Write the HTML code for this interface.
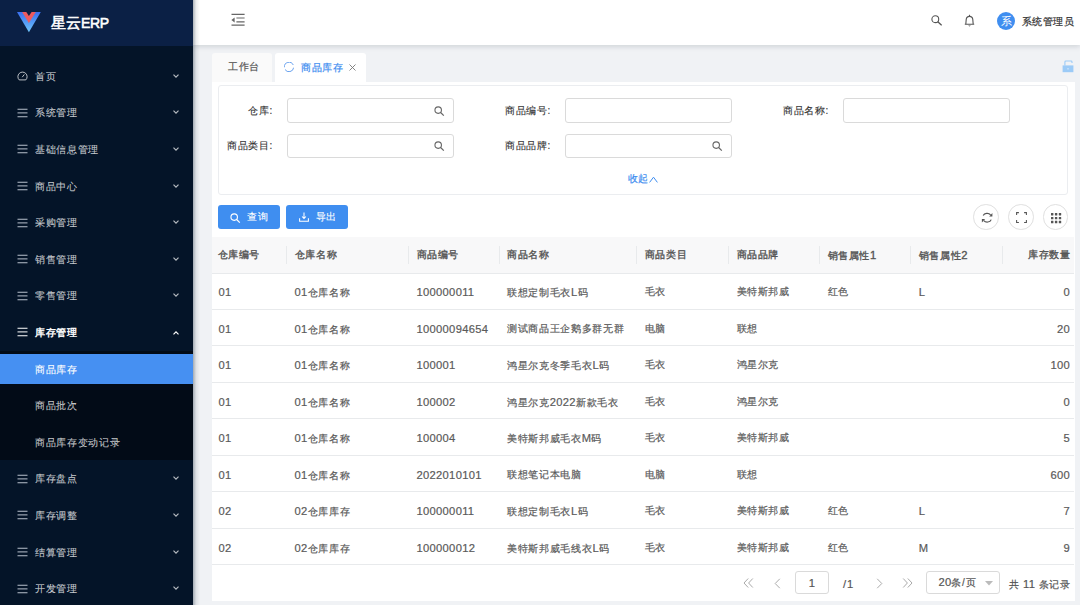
<!DOCTYPE html>
<html><head><meta charset="utf-8">
<style>
*{box-sizing:border-box;margin:0;padding:0}
html,body{width:1080px;height:605px;overflow:hidden}
body{position:relative;background:#f0f2f5;font-family:"Liberation Sans",sans-serif;font-size:10px;letter-spacing:.65px;color:#555;-webkit-text-stroke-width:.2px}
.abs{position:absolute}
.l{font-size:11.2px;letter-spacing:.3px}
#side{position:absolute;left:0;top:0;width:193px;height:605px;background:#041428;z-index:3}
#sshadow{position:absolute;left:193px;top:0;width:7px;height:605px;background:linear-gradient(to right,rgba(0,21,41,.32),rgba(0,21,41,.08) 45%,rgba(0,21,41,0));z-index:4}
#logo{position:absolute;left:0;top:0;width:193px;height:45.5px;background:#0b2045}
#logo .t{position:absolute;left:51px;top:12px;font-size:14.5px;color:#fff;line-height:22px;letter-spacing:0;-webkit-text-stroke-width:.55px}
#logo .t .l{font-size:14px;letter-spacing:-.4px}
.mi{position:absolute;left:0;width:193px;height:36.5px;line-height:36.5px;color:rgba(255,255,255,.72)}
.mi .tx{position:absolute;left:35px;top:1px;-webkit-text-stroke-width:.1px}
.mi .ic{position:absolute;left:16.5px;top:13.5px;width:11px;height:10px;overflow:visible}
.mi .ar{position:absolute;left:172.9px;top:16.2px;width:6px;height:4px;overflow:visible}
#sub{position:absolute;left:0;top:351px;width:193px;height:108.5px;background:#020b17}
#act{position:absolute;left:0;top:353.5px;width:193px;height:30px;background:#4690f2}
#hdr{position:absolute;left:193px;top:0;width:887px;height:45px;background:#fff;box-shadow:0 2px 5px rgba(0,21,41,.13);z-index:2}
#cont{position:absolute;left:212px;top:82px;width:863px;height:519px;background:#fff}
.tab{position:absolute;top:53px;height:29px;border-radius:3px 3px 0 0;line-height:29px}
.inp{position:absolute;height:24.5px;border:1px solid #dadada;border-radius:3px;background:#fff}
.lbl{position:absolute;color:#333;line-height:14px;text-align:right;margin-top:-.3px;-webkit-text-stroke-width:.12px}
.btn{position:absolute;top:205px;height:24px;width:62px;border-radius:3px;background:#3f8ef0;color:#fff;line-height:24px;-webkit-text-stroke-width:.1px}
.cbtn{position:absolute;top:204px;width:25.5px;height:25.5px;border-radius:50%;border:1px solid #e0e0e0;background:#fff}
#thead{position:absolute;z-index:1;left:212px;top:237.3px;width:862px;height:36.6px;background:#f8f8f9;border-bottom:1px solid #e8eaec}
.row{position:absolute;left:212px;width:862px;height:36.6px;border-bottom:1px solid #e8eaec;background:#fff}
.c{position:absolute;top:0;line-height:38px;white-space:nowrap;color:#5a5a5a}
.th{color:#555;-webkit-text-stroke-width:.35px;line-height:36px}
.dv{position:absolute;top:9px;width:1px;height:18px;background:#e8eaec}
</style></head>
<body>
<div id="side">
<div id="logo">
<svg class="abs" style="left:17px;top:12px" width="24" height="21" viewBox="0 0 24 21">
<defs><linearGradient id="lg" x1="0" y1="0" x2="0" y2="1"><stop offset="0" stop-color="#3a6ff0"/><stop offset="1" stop-color="#6ec6fb"/></linearGradient></defs>
<polygon points="0,0 23.8,0 11.9,20.2" fill="url(#lg)"/>
<polygon points="5.1,0 18.8,0 11.9,10.9" fill="#ee5a5e"/>
<polygon points="9.3,0 14.6,0 11.9,3.9" fill="#0b2045"/>
</svg>
<div class="t">星云<span class="l">ERP</span></div>
</div>
<div id="sub"></div><div id="act"></div>
<div class="mi" style="top:57.70px"><svg class="ic" viewBox="0 0 11 10"><path d="M2.2,8.9 A4.6,4.6 0 1 1 8.8,8.9 Z" fill="none" stroke="currentColor" stroke-width="1"/><path d="M5.2,6.2 L7.4,3.4" stroke="currentColor" stroke-width="1"/></svg><svg class="ar" viewBox="0 0 6 4"><path d="M0.5,0.7 L3,3.2 L5.5,0.7" fill="none" stroke="currentColor" stroke-width="1.15"/></svg><span class="tx">首页</span></div>
<div class="mi" style="top:94.30px"><svg class="ic" viewBox="0 0 11 10"><path d="M0.5,1.25 H10.5 M0.5,4.9 H10.5 M0.5,8.75 H10.5" stroke="#b8c0cc" stroke-width="1"/></svg><svg class="ar" viewBox="0 0 6 4"><path d="M0.5,0.7 L3,3.2 L5.5,0.7" fill="none" stroke="currentColor" stroke-width="1.15"/></svg><span class="tx">系统管理</span></div>
<div class="mi" style="top:130.90px"><svg class="ic" viewBox="0 0 11 10"><path d="M0.5,1.25 H10.5 M0.5,4.9 H10.5 M0.5,8.75 H10.5" stroke="#b8c0cc" stroke-width="1"/></svg><svg class="ar" viewBox="0 0 6 4"><path d="M0.5,0.7 L3,3.2 L5.5,0.7" fill="none" stroke="currentColor" stroke-width="1.15"/></svg><span class="tx">基础信息管理</span></div>
<div class="mi" style="top:167.50px"><svg class="ic" viewBox="0 0 11 10"><path d="M0.5,1.25 H10.5 M0.5,4.9 H10.5 M0.5,8.75 H10.5" stroke="#b8c0cc" stroke-width="1"/></svg><svg class="ar" viewBox="0 0 6 4"><path d="M0.5,0.7 L3,3.2 L5.5,0.7" fill="none" stroke="currentColor" stroke-width="1.15"/></svg><span class="tx">商品中心</span></div>
<div class="mi" style="top:204.10px"><svg class="ic" viewBox="0 0 11 10"><path d="M0.5,1.25 H10.5 M0.5,4.9 H10.5 M0.5,8.75 H10.5" stroke="#b8c0cc" stroke-width="1"/></svg><svg class="ar" viewBox="0 0 6 4"><path d="M0.5,0.7 L3,3.2 L5.5,0.7" fill="none" stroke="currentColor" stroke-width="1.15"/></svg><span class="tx">采购管理</span></div>
<div class="mi" style="top:240.70px"><svg class="ic" viewBox="0 0 11 10"><path d="M0.5,1.25 H10.5 M0.5,4.9 H10.5 M0.5,8.75 H10.5" stroke="#b8c0cc" stroke-width="1"/></svg><svg class="ar" viewBox="0 0 6 4"><path d="M0.5,0.7 L3,3.2 L5.5,0.7" fill="none" stroke="currentColor" stroke-width="1.15"/></svg><span class="tx">销售管理</span></div>
<div class="mi" style="top:277.30px"><svg class="ic" viewBox="0 0 11 10"><path d="M0.5,1.25 H10.5 M0.5,4.9 H10.5 M0.5,8.75 H10.5" stroke="#b8c0cc" stroke-width="1"/></svg><svg class="ar" viewBox="0 0 6 4"><path d="M0.5,0.7 L3,3.2 L5.5,0.7" fill="none" stroke="currentColor" stroke-width="1.15"/></svg><span class="tx">零售管理</span></div>
<div class="mi" style="top:313.90px;color:#fff"><svg class="ic" viewBox="0 0 11 10"><path d="M0.5,1.25 H10.5 M0.5,4.9 H10.5 M0.5,8.75 H10.5" stroke="#fff" stroke-width="1"/></svg><svg class="ar" viewBox="0 0 6 4" style="top:17.2px"><path d="M0.5,3.3 L3,0.8 L5.5,3.3" fill="none" stroke="currentColor" stroke-width="1.15"/></svg><span class="tx" style="-webkit-text-stroke-width:.4px">库存管理</span></div>
<div class="mi" style="top:350.50px;color:#fff"><span class="tx">商品库存</span></div>
<div class="mi" style="top:387.10px"><span class="tx">商品批次</span></div>
<div class="mi" style="top:423.70px"><span class="tx">商品库存变动记录</span></div>
<div class="mi" style="top:460.30px"><svg class="ic" viewBox="0 0 11 10"><path d="M0.5,1.25 H10.5 M0.5,4.9 H10.5 M0.5,8.75 H10.5" stroke="#b8c0cc" stroke-width="1"/></svg><svg class="ar" viewBox="0 0 6 4"><path d="M0.5,0.7 L3,3.2 L5.5,0.7" fill="none" stroke="currentColor" stroke-width="1.15"/></svg><span class="tx">库存盘点</span></div>
<div class="mi" style="top:496.90px"><svg class="ic" viewBox="0 0 11 10"><path d="M0.5,1.25 H10.5 M0.5,4.9 H10.5 M0.5,8.75 H10.5" stroke="#b8c0cc" stroke-width="1"/></svg><svg class="ar" viewBox="0 0 6 4"><path d="M0.5,0.7 L3,3.2 L5.5,0.7" fill="none" stroke="currentColor" stroke-width="1.15"/></svg><span class="tx">库存调整</span></div>
<div class="mi" style="top:533.50px"><svg class="ic" viewBox="0 0 11 10"><path d="M0.5,1.25 H10.5 M0.5,4.9 H10.5 M0.5,8.75 H10.5" stroke="#b8c0cc" stroke-width="1"/></svg><svg class="ar" viewBox="0 0 6 4"><path d="M0.5,0.7 L3,3.2 L5.5,0.7" fill="none" stroke="currentColor" stroke-width="1.15"/></svg><span class="tx">结算管理</span></div>
<div class="mi" style="top:570.10px"><svg class="ic" viewBox="0 0 11 10"><path d="M0.5,1.25 H10.5 M0.5,4.9 H10.5 M0.5,8.75 H10.5" stroke="#b8c0cc" stroke-width="1"/></svg><svg class="ar" viewBox="0 0 6 4"><path d="M0.5,0.7 L3,3.2 L5.5,0.7" fill="none" stroke="currentColor" stroke-width="1.15"/></svg><span class="tx">开发管理</span></div>
</div>
<div id="sshadow"></div>
<div id="hdr">
<svg class="abs" style="left:37.5px;top:12.5px" width="15" height="14" viewBox="0 0 15 14"><path d="M0.5,1.4 H13.6 M5.4,5 H13.6 M5.4,8.8 H13.6 M0.5,12.2 H13.6" stroke="#666" stroke-width="1.2"/><path d="M0.4,6.95 L3.6,4.4 L3.6,9.5 Z" fill="#666"/></svg>
<svg class="abs" style="left:737.5px;top:15.2px" width="11.5" height="11" viewBox="0 0 11.5 11"><circle cx="4.3" cy="4.2" r="3.4" fill="none" stroke="#555" stroke-width="1.1"/><path d="M6.8,6.7 L10.6,10.3" stroke="#555" stroke-width="1.25"/></svg>
<svg class="abs" style="left:771px;top:13.8px" width="11" height="13" viewBox="0 0 11 13"><path d="M1.8,10.3 L2.2,5.6 C2.4,3.4 3.6,2.4 5.5,2.4 C7.4,2.4 8.6,3.4 8.8,5.6 L9.2,10.3 M0.8,10.3 H10.2" fill="none" stroke="#555" stroke-width="1.1"/><path d="M4.1,11.5 L5.5,12.6 L6.9,11.5 Z" fill="#555"/><path d="M5.5,0.8 V2.2" stroke="#555" stroke-width="1.1"/></svg>
<div class="abs" style="left:804px;top:12px;width:18.3px;height:18.3px;border-radius:50%;background:#3f8ef0;color:#fff;font-size:11px;line-height:18.3px;text-align:center;letter-spacing:0;-webkit-text-stroke-width:0">系</div>
<div class="abs" style="left:828.5px;top:14.7px;color:#333;line-height:14px">系统管理员</div>
</div>
<div id="cont"></div>
<div class="tab" style="left:212.4px;width:59.6px;background:#fafafa;color:#555"><span class="abs" style="left:15.6px;top:-.7px">工作台</span></div>
<div class="tab" style="left:275px;width:91.2px;background:#fff;color:#3f8ef0">
<svg class="abs" style="left:9.1px;top:8.8px" width="10" height="10" viewBox="0 0 10 10"><path d="M0.31,5.3 A4.7,4.7 0 0 1 9.26,3.0 M9.65,5.65 A4.7,4.7 0 0 1 1.0,7.5" fill="none" stroke="#6aa2ee" stroke-width="1"/></svg>
<span class="abs" style="left:26px">商品库存</span>
<svg class="abs" style="left:74.4px;top:10.8px" width="7" height="7" viewBox="0 0 7 7"><path d="M0.5,0.5 L6.5,6.5 M6.5,0.5 L0.5,6.5" stroke="#777" stroke-width="0.9"/></svg>
</div>
<svg class="abs" style="left:1061.5px;top:59.5px" width="12" height="13" viewBox="0 0 12 13"><path d="M2.9,5.6 V1.9 Q2.9,1 3.8,1 H9.1 Q10,1 10,1.9 V3.1" fill="none" stroke="#9ccbf7" stroke-width="1.1"/><rect x="0.6" y="5.4" width="10.8" height="6.8" fill="#9ccbf7"/><rect x="5.3" y="8.1" width="1.4" height="1.4" rx=".5" fill="#fff" opacity=".55"/></svg>
<div class="abs" style="left:218.4px;top:84.5px;width:850px;height:110px;border:1px solid #ebedf0;border-radius:3px"></div>
<div class="lbl" style="left:226px;top:104px;width:47px">仓库:</div>
<div class="lbl" style="left:226px;top:139px;width:47px">商品类目:</div>
<div class="lbl" style="left:500px;top:104px;width:51px">商品编号:</div>
<div class="lbl" style="left:500px;top:139px;width:51px">商品品牌:</div>
<div class="lbl" style="left:778px;top:104px;width:51px">商品名称:</div>
<div class="inp" style="left:287px;top:98px;width:166.5px"></div>
<div class="inp" style="left:287px;top:133.5px;width:166.5px"></div>
<div class="inp" style="left:565px;top:98px;width:166.5px"></div>
<div class="inp" style="left:565px;top:133.5px;width:166.5px"></div>
<div class="inp" style="left:843px;top:98px;width:166.5px"></div>
<svg class="abs" style="left:434px;top:105.5px" width="11" height="11" viewBox="0 0 11 11"><circle cx="4.2" cy="4.1" r="3.25" fill="none" stroke="#666" stroke-width="1.1"/><path d="M6.6,6.5 L9.8,9.7" stroke="#666" stroke-width="1.2"/></svg>
<svg class="abs" style="left:434px;top:141px" width="11" height="11" viewBox="0 0 11 11"><circle cx="4.2" cy="4.1" r="3.25" fill="none" stroke="#666" stroke-width="1.1"/><path d="M6.6,6.5 L9.8,9.7" stroke="#666" stroke-width="1.2"/></svg>
<svg class="abs" style="left:712px;top:141px" width="11" height="11" viewBox="0 0 11 11"><circle cx="4.2" cy="4.1" r="3.25" fill="none" stroke="#666" stroke-width="1.1"/><path d="M6.6,6.5 L9.8,9.7" stroke="#666" stroke-width="1.2"/></svg>
<div class="abs" style="left:627.5px;top:172px;color:#3f8ef0;line-height:14px">收起<svg width="9" height="7" viewBox="0 0 9 7" style="margin-left:.6px;vertical-align:-.6px"><path d="M0.6,6.4 L4.5,1.2 L8.4,6.4" fill="none" stroke="#3f8ef0" stroke-width="1"/></svg></div>
<div class="btn" style="left:218.2px"><svg class="abs" style="left:12.3px;top:7.5px" width="11" height="11" viewBox="0 0 11 11"><circle cx="4.2" cy="4.1" r="3.25" fill="none" stroke="#fff" stroke-width="1.1"/><path d="M6.6,6.5 L9.8,9.7" stroke="#fff" stroke-width="1.2"/></svg><span class="abs" style="left:29px">查询</span></div>
<div class="btn" style="left:286.4px"><svg class="abs" style="left:12.6px;top:7.2px" width="10" height="10" viewBox="0 0 10 10"><path d="M5,0.4 V6.4 M3.1,4.5 L5,6.4 L6.9,4.5 M0.6,6.3 V9.3 H9.4 V6.3" fill="none" stroke="#fff" stroke-width="1.05"/></svg><span class="abs" style="left:29.4px">导出</span></div>
<div class="cbtn" style="left:973.3px"><svg class="abs" style="left:6.5px;top:7.3px" width="12.5" height="11.5" viewBox="0 0 12.5 11.5"><path d="M2.2,3.6 C3.4,0.9 7.6,0.5 9.6,2.8" fill="none" stroke="#555" stroke-width="1.2"/><path d="M11.4,1 L11.4,4.4 L8.2,4.4 Z" fill="#555"/><path d="M10.2,7.6 C9.1,10.4 4.8,10.9 2.8,8.6" fill="none" stroke="#555" stroke-width="1.2"/><path d="M0.9,10.6 L0.9,7.1 L4.1,7.1 Z" fill="#555"/></svg></div>
<div class="cbtn" style="left:1008px"><svg class="abs" style="left:6.9px;top:7.3px" width="11" height="11" viewBox="0 0 11 11"><path d="M0.6,2.9 V0.6 H2.9 M8.1,0.6 H10.4 V2.9 M10.4,8.1 V10.4 H8.1 M2.9,10.4 H0.6 V8.1" fill="none" stroke="#555" stroke-width="1.05"/></svg></div>
<div class="cbtn" style="left:1042.6px"><svg class="abs" style="left:7.6px;top:8.2px" width="11" height="11" viewBox="0 0 11 11"><g fill="#555"><rect x="0.0" y="0.0" width="2.4" height="2.4" rx=".3"/><rect x="3.9" y="0.0" width="2.4" height="2.4" rx=".3"/><rect x="7.8" y="0.0" width="2.4" height="2.4" rx=".3"/><rect x="0.0" y="3.9" width="2.4" height="2.4" rx=".3"/><rect x="3.9" y="3.9" width="2.4" height="2.4" rx=".3"/><rect x="7.8" y="3.9" width="2.4" height="2.4" rx=".3"/><rect x="0.0" y="7.8" width="2.4" height="2.4" rx=".3"/><rect x="3.9" y="7.8" width="2.4" height="2.4" rx=".3"/><rect x="7.8" y="7.8" width="2.4" height="2.4" rx=".3"/></g></svg></div>
<div id="thead"><div class="c th" style="left:5.5px">仓库编号</div><div class="c th" style="left:82.6px">仓库名称</div><div class="c th" style="left:204.5px">商品编号</div><div class="c th" style="left:295.2px">商品名称</div><div class="c th" style="left:432.8px">商品类目</div><div class="c th" style="left:524.5px">商品品牌</div><div class="c th" style="left:615.5px">销售属性<span class="l">1</span></div><div class="c th" style="left:706.7px">销售属性<span class="l">2</span></div><div class="c th" style="left:790.3px;width:68.5px;text-align:right">库存数量</div><div class="dv" style="left:74.1px"></div><div class="dv" style="left:196.0px"></div><div class="dv" style="left:286.7px"></div><div class="dv" style="left:424.3px"></div><div class="dv" style="left:516.0px"></div><div class="dv" style="left:607.0px"></div><div class="dv" style="left:698.2px"></div><div class="dv" style="left:789.8px"></div></div>
<div class="row" style="top:273.30px"><div class="c " style="left:6.5px"><span class="l">01</span></div><div class="c " style="left:82.6px"><span class="l">01</span>仓库名称</div><div class="c " style="left:204.5px"><span class="l">100000011</span></div><div class="c " style="left:295.2px">联想定制毛衣<span class="l">L</span>码</div><div class="c " style="left:432.8px">毛衣</div><div class="c " style="left:524.5px">美特斯邦威</div><div class="c " style="left:615.5px">红色</div><div class="c " style="left:706.7px"><span class="l">L</span></div><div class="c " style="left:790.3px;width:67.7px;text-align:right"><span class="l">0</span></div></div>
<div class="row" style="top:309.80px"><div class="c " style="left:6.5px"><span class="l">01</span></div><div class="c " style="left:82.6px"><span class="l">01</span>仓库名称</div><div class="c " style="left:204.5px"><span class="l">10000094654</span></div><div class="c " style="left:295.2px">测试商品王企鹅多群无群</div><div class="c " style="left:432.8px">电脑</div><div class="c " style="left:524.5px">联想</div><div class="c " style="left:615.5px"></div><div class="c " style="left:706.7px"></div><div class="c " style="left:790.3px;width:67.7px;text-align:right"><span class="l">20</span></div></div>
<div class="row" style="top:346.30px"><div class="c " style="left:6.5px"><span class="l">01</span></div><div class="c " style="left:82.6px"><span class="l">01</span>仓库名称</div><div class="c " style="left:204.5px"><span class="l">100001</span></div><div class="c " style="left:295.2px">鸿星尔克冬季毛衣<span class="l">L</span>码</div><div class="c " style="left:432.8px">毛衣</div><div class="c " style="left:524.5px">鸿星尔克</div><div class="c " style="left:615.5px"></div><div class="c " style="left:706.7px"></div><div class="c " style="left:790.3px;width:67.7px;text-align:right"><span class="l">100</span></div></div>
<div class="row" style="top:382.80px"><div class="c " style="left:6.5px"><span class="l">01</span></div><div class="c " style="left:82.6px"><span class="l">01</span>仓库名称</div><div class="c " style="left:204.5px"><span class="l">100002</span></div><div class="c " style="left:295.2px">鸿星尔克<span class="l">2022</span>新款毛衣</div><div class="c " style="left:432.8px">毛衣</div><div class="c " style="left:524.5px">鸿星尔克</div><div class="c " style="left:615.5px"></div><div class="c " style="left:706.7px"></div><div class="c " style="left:790.3px;width:67.7px;text-align:right"><span class="l">0</span></div></div>
<div class="row" style="top:419.30px"><div class="c " style="left:6.5px"><span class="l">01</span></div><div class="c " style="left:82.6px"><span class="l">01</span>仓库名称</div><div class="c " style="left:204.5px"><span class="l">100004</span></div><div class="c " style="left:295.2px">美特斯邦威毛衣<span class="l">M</span>码</div><div class="c " style="left:432.8px">毛衣</div><div class="c " style="left:524.5px">美特斯邦威</div><div class="c " style="left:615.5px"></div><div class="c " style="left:706.7px"></div><div class="c " style="left:790.3px;width:67.7px;text-align:right"><span class="l">5</span></div></div>
<div class="row" style="top:455.80px"><div class="c " style="left:6.5px"><span class="l">01</span></div><div class="c " style="left:82.6px"><span class="l">01</span>仓库名称</div><div class="c " style="left:204.5px"><span class="l">2022010101</span></div><div class="c " style="left:295.2px">联想笔记本电脑</div><div class="c " style="left:432.8px">电脑</div><div class="c " style="left:524.5px">联想</div><div class="c " style="left:615.5px"></div><div class="c " style="left:706.7px"></div><div class="c " style="left:790.3px;width:67.7px;text-align:right"><span class="l">600</span></div></div>
<div class="row" style="top:492.30px"><div class="c " style="left:6.5px"><span class="l">02</span></div><div class="c " style="left:82.6px"><span class="l">02</span>仓库库存</div><div class="c " style="left:204.5px"><span class="l">100000011</span></div><div class="c " style="left:295.2px">联想定制毛衣<span class="l">L</span>码</div><div class="c " style="left:432.8px">毛衣</div><div class="c " style="left:524.5px">美特斯邦威</div><div class="c " style="left:615.5px">红色</div><div class="c " style="left:706.7px"><span class="l">L</span></div><div class="c " style="left:790.3px;width:67.7px;text-align:right"><span class="l">7</span></div></div>
<div class="row" style="top:528.80px"><div class="c " style="left:6.5px"><span class="l">02</span></div><div class="c " style="left:82.6px"><span class="l">02</span>仓库库存</div><div class="c " style="left:204.5px"><span class="l">100000012</span></div><div class="c " style="left:295.2px">美特斯邦威毛线衣<span class="l">L</span>码</div><div class="c " style="left:432.8px">毛衣</div><div class="c " style="left:524.5px">美特斯邦威</div><div class="c " style="left:615.5px">红色</div><div class="c " style="left:706.7px"><span class="l">M</span></div><div class="c " style="left:790.3px;width:67.7px;text-align:right"><span class="l">9</span></div></div>
<svg class="abs" style="left:743px;top:577px" width="11" height="12" viewBox="0 0 11 12"><path d="M5.2,1.5 L1,6 L5.2,10.5 M9.8,1.5 L5.6,6 L9.8,10.5" fill="none" stroke="#aaa" stroke-width="1"/></svg>
<svg class="abs" style="left:773.5px;top:577.5px" width="7" height="11" viewBox="0 0 7 11"><path d="M5.8,0.8 L1.2,5.5 L5.8,10.2" fill="none" stroke="#aaa" stroke-width="1"/></svg>
<div class="abs" style="left:795.3px;top:571.3px;width:33.4px;height:22.5px;border:1px solid #dadada;border-radius:3px;text-align:center;line-height:22.5px;color:#555"><span class="l">1</span></div>
<div class="abs" style="left:843px;top:576.8px;line-height:14px;color:#555;letter-spacing:0"><span style="font-size:11.2px">/&#8202;1</span></div>
<svg class="abs" style="left:875.8px;top:577.5px" width="7" height="11" viewBox="0 0 7 11"><path d="M1.2,0.8 L5.8,5.5 L1.2,10.2" fill="none" stroke="#aaa" stroke-width="1"/></svg>
<svg class="abs" style="left:901.5px;top:577px" width="11" height="12" viewBox="0 0 11 12"><path d="M1.2,1.5 L5.4,6 L1.2,10.5 M5.8,1.5 L10,6 L5.8,10.5" fill="none" stroke="#aaa" stroke-width="1"/></svg>
<div class="abs" style="left:926px;top:571.4px;width:74.3px;height:22.4px;border:1px solid #dadada;border-radius:3px;color:#555;line-height:21.6px"><span class="abs" style="left:11.4px"><span class="l">20</span>条/页</span><svg class="abs" style="left:58.3px;top:8.3px" width="8" height="5" viewBox="0 0 8 5"><path d="M0,0 H8 L4,4.5 Z" fill="#bbb"/></svg></div>
<div class="abs" style="left:1009px;top:576.8px;line-height:14px;color:#555">共<span class="l"> 11 </span>条记录</div>
</body></html>
